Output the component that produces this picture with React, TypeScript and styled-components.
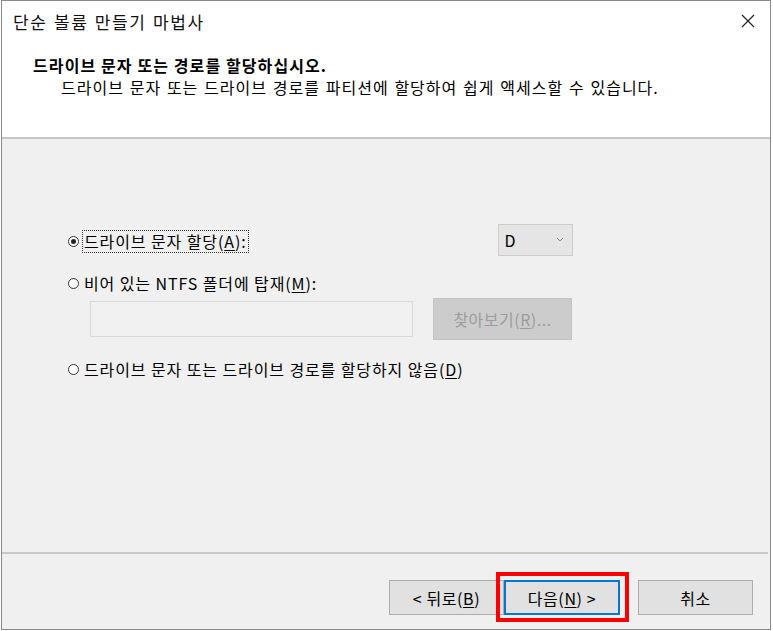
import React, { useState } from 'react'
import styled, { createGlobalStyle } from 'styled-components'

const GlobalStyle = createGlobalStyle`
  html, body {
    margin: 0;
    padding: 0;
    background: #ffffff;
  }
  body {
    font-family: "Noto Sans CJK KR", "Noto Sans", sans-serif;
    color: #000;
  }
`

const Page = styled.div`
  padding-left: 1px;
`

const Window = styled.div`
  width: 770px;
  height: 630px;
  box-sizing: border-box;
  border: 1px solid #8a8a8a;
  display: flex;
  flex-direction: column;
  background: #f0f0f0;
`

const Header = styled.div`
  height: 138px;
  box-sizing: border-box;
  background: #ffffff;
  border-bottom: 2px solid #c6c6c6;
`

const TitleBar = styled.div`
  height: 40px;
  display: flex;
  align-items: center;
  justify-content: space-between;
  padding: 0 14px 0 11px;
`

const Title = styled.div`
  font-size: 17px;
  letter-spacing: 1.6px;
  word-spacing: 1px;
  color: #111;
`

const CloseButton = styled.button`
  border: none;
  background: none;
  padding: 0;
  width: 16px;
  height: 16px;
  display: flex;
  align-items: center;
  justify-content: center;
  cursor: pointer;
`

const Heading = styled.div`
  margin: 12px 0 0 31px;
  font-size: 16px;
  font-weight: bold;
  letter-spacing: 1.1px;
  line-height: 24px;
`

const SubHeading = styled.div`
  margin-left: 59px;
  font-size: 16px;
  line-height: 20px;
  letter-spacing: 1px;
  word-spacing: 1.2px;
`

const Body = styled.div`
  flex: 1;
  padding: 90px 0 0 66px;
`

const OptionRow = styled.div<{ gap?: number }>`
  display: flex;
  align-items: center;
  margin-top: ${({ gap }) => gap ?? 0}px;
  height: 24px;
`

const Radio = styled.span<{ checked?: boolean }>`
  width: 11px;
  height: 11px;
  box-sizing: border-box;
  border-radius: 50%;
  border: 1px solid #333;
  background: #fff;
  display: flex;
  align-items: center;
  justify-content: center;
  flex-shrink: 0;
  &::after {
    content: '';
    width: 5px;
    height: 5px;
    border-radius: 50%;
    background: ${({ checked }) => (checked ? '#222' : 'transparent')};
  }
`

const Label = styled.span<{ focused?: boolean }>`
  font-size: 16px;
  line-height: 21px;
  letter-spacing: 0.9px;
  margin-left: 3px;
  padding: 0 1px;
  border: 1px dotted ${({ focused }) => (focused ? '#333' : 'transparent')};
  white-space: nowrap;
`

const U = styled.span`
  text-decoration: underline;
  text-underline-offset: 2px;
`

const Select = styled.div`
  margin-left: 249px;
  margin-top: -3px;
  width: 75px;
  height: 32px;
  box-sizing: border-box;
  background: #e5e5e5;
  border: 1px solid #cccccc;
  display: flex;
  align-items: center;
  justify-content: space-between;
  padding: 0 8px 0 6px;
  font-size: 16px;
`

const PathRow = styled.div`
  display: flex;
  align-items: center;
  margin: 3px 0 0 22px;
  gap: 20px;
`

const PathInput = styled.div`
  width: 323px;
  height: 36px;
  box-sizing: border-box;
  background: #f1f1f1;
  border: 1px solid #d9d9d9;
`

const BrowseButton = styled.div`
  width: 139px;
  height: 42px;
  box-sizing: border-box;
  background: #cccccc;
  border: 1px solid #c4c4c4;
  color: #9c9c9c;
  font-size: 16px;
  letter-spacing: 0.5px;
  display: flex;
  align-items: center;
  justify-content: center;
`

const Footer = styled.div`
  height: 77px;
  box-sizing: border-box;
  border-top: 2px solid #c8c8c8;
  margin-right: 2px;
  display: flex;
  align-items: flex-start;
  justify-content: flex-end;
  padding: 26px 15px 0 0;
`

const Button = styled.button<{ primary?: boolean; spaced?: boolean }>`
  width: ${({ primary }) => (primary ? 116 : 115)}px;
  height: 35px;
  box-sizing: border-box;
  margin-left: ${({ spaced }) => (spaced ? 18 : 0)}px;
  background: #e1e1e1;
  border: ${({ primary }) => (primary ? '2px solid #0078d7' : '1px solid #adadad')};
  font-family: "Noto Sans CJK KR", "Noto Sans", sans-serif;
  font-size: 16px;
  letter-spacing: 0.6px;
  color: #000;
  padding: 0;
  text-align: center;
  white-space: nowrap;
`

const Highlight = styled.div`
  position: relative;
  &::after {
    content: '';
    position: absolute;
    left: -8px;
    top: -8px;
    right: -9px;
    bottom: -7px;
    border: 4px solid #ff0000;
    pointer-events: none;
  }
`

export default function App() {
  const [choice, setChoice] = useState<number>(0)

  return (
    <Page>
      <GlobalStyle />
      <Window>
        <Header>
          <TitleBar>
            <Title>단순 볼륨 만들기 마법사</Title>
            <CloseButton title="닫기">
              <svg width="14" height="14" viewBox="0 0 14 14">
                <path d="M1 1 L13 13 M13 1 L1 13" stroke="#222" strokeWidth="1.2" />
              </svg>
            </CloseButton>
          </TitleBar>
          <Heading>드라이브 문자 또는 경로를 할당하십시오.</Heading>
          <SubHeading>드라이브 문자 또는 드라이브 경로를 파티션에 할당하여 쉽게 액세스할 수 있습니다.</SubHeading>
        </Header>

        <Body>
          <OptionRow onClick={() => setChoice(0)}>
            <Radio checked={choice === 0} />
            <Label focused>
              드라이브 문자 할당(<U>A</U>):
            </Label>
            <Select>
              <span>D</span>
              <svg width="8" height="5" viewBox="0 0 8 5">
                <path d="M1 1 L4 4 L7 1" stroke="#888" strokeWidth="1" fill="none" />
              </svg>
            </Select>
          </OptionRow>

          <OptionRow gap={18} onClick={() => setChoice(1)}>
            <Radio checked={choice === 1} />
            <Label>
              비어 있는 NTFS 폴더에 탑재(<U>M</U>):
            </Label>
          </OptionRow>
          <PathRow>
            <PathInput />
            <BrowseButton>
              찾아보기(<U>R</U>)...
            </BrowseButton>
          </PathRow>

          <OptionRow gap={17} onClick={() => setChoice(2)}>
            <Radio checked={choice === 2} />
            <Label>
              드라이브 문자 또는 드라이브 경로를 할당하지 않음(<U>D</U>)
            </Label>
          </OptionRow>
        </Body>

        <Footer>
          <Button>
            &lt; 뒤로(<U>B</U>)
          </Button>
          <Highlight>
            <Button primary>
              다음(<U>N</U>) &gt;
            </Button>
          </Highlight>
          <Button spaced>취소</Button>
        </Footer>
      </Window>
    </Page>
  )
}
